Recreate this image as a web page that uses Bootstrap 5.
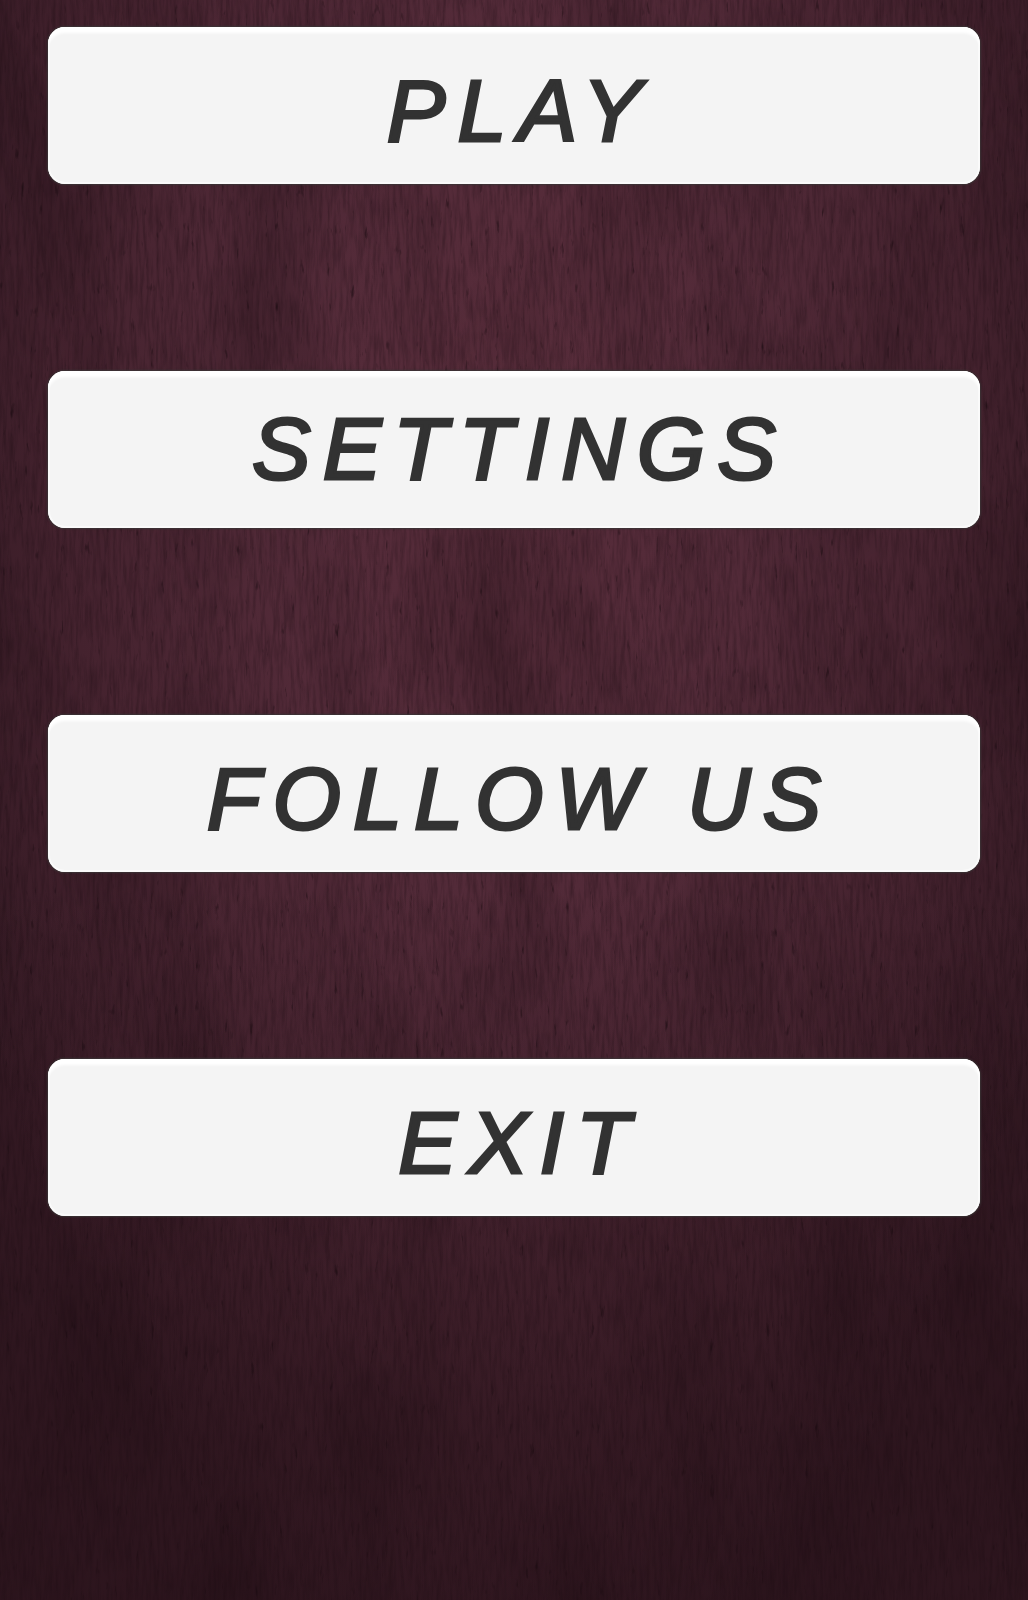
<!DOCTYPE html>
<html lang="en">
<head>
<meta charset="utf-8">
<meta name="viewport" content="width=device-width, initial-scale=1">
<title>Main menu</title>
<link href="https://cdn.jsdelivr.net/npm/bootstrap@5.3.0/dist/css/bootstrap.min.css" rel="stylesheet">
<style>
  body {
    background: #351a24 radial-gradient(ellipse 58% 80% at 50% 26%, #572c3a 0%, #522a38 40%, #44222e 75%, #351a24 100%);
  }
  .wood-grain { z-index: -1; }
  .menu-shade {
    background: linear-gradient(to bottom, rgba(30, 12, 18, 0) 55%, rgba(30, 12, 18, .35) 90%);
  }
  .menu-list { padding: 27px 48px; gap: 187px; }
  .menu-btn {
    --bs-btn-bg: #f4f4f4;
    --bs-btn-color: #323232;
    --bs-btn-hover-bg: #ffffff;
    --bs-btn-hover-color: #323232;
    --bs-btn-active-bg: #dddddd;
    --bs-btn-border-width: 0;
    --bs-btn-border-radius: 17px;
    --bs-btn-padding-x: 12px;
    height: 157px;
    box-shadow: inset 0 7px 3px -1px #fff, inset 0 0 0 2px #fafafa, 0 0 2px 1px #3a3435;
    font: italic 400 88px/100px "Liberation Sans", Arial, sans-serif;
    letter-spacing: 12px;
    -webkit-text-stroke: 3px #323232;
  }
</style>
</head>
<body class="min-vh-100 position-relative">
<svg class="wood-grain position-absolute top-0 start-0 w-100 h-100" aria-hidden="true">
  <filter id="fine" x="0" y="0" width="100%" height="100%" color-interpolation-filters="sRGB">
    <feTurbulence type="fractalNoise" baseFrequency=".3 .03" numOctaves="4" seed="7"/>
    <feColorMatrix values="0 0 0 0 .08  0 0 0 0 .03  0 0 0 0 .05  .6 0 0 0 -.22"/>
  </filter>
  <filter id="flecks" x="0" y="0" width="100%" height="100%" color-interpolation-filters="sRGB">
    <feTurbulence type="fractalNoise" baseFrequency=".2 .05" numOctaves="3" seed="31"/>
    <feColorMatrix values="0 0 0 0 .08  0 0 0 0 .03  0 0 0 0 .05  2.4 0 0 0 -1.68"/>
  </filter>
  <filter id="patches" x="0" y="0" width="100%" height="100%" color-interpolation-filters="sRGB">
    <feTurbulence type="fractalNoise" baseFrequency=".009 .004" numOctaves="4" seed="12"/>
    <feColorMatrix values="0 0 0 0 .08  0 0 0 0 .03  0 0 0 0 .05  .6 0 0 0 -.26"/>
  </filter>
  <rect width="100%" height="100%" filter="url(#patches)"/>
  <rect width="100%" height="100%" filter="url(#fine)"/>
  <rect width="100%" height="100%" filter="url(#flecks)"/>
</svg>
<main class="menu-shade min-vh-100">
  <nav class="menu-list d-flex flex-column" aria-label="Main menu">
    <button type="button" class="btn menu-btn w-100 pt-3 pe-0">PLAY</button>
    <button type="button" class="btn menu-btn w-100 pt-1 pe-0">SETTINGS</button>
    <button type="button" class="btn menu-btn w-100 pt-3 pe-0">FOLLOW US</button>
    <button type="button" class="btn menu-btn w-100 pt-3 pe-0">EXIT</button>
  </nav>
</main>
<script src="https://cdn.jsdelivr.net/npm/bootstrap@5.3.0/dist/js/bootstrap.bundle.min.js"></script>
</body>
</html>
